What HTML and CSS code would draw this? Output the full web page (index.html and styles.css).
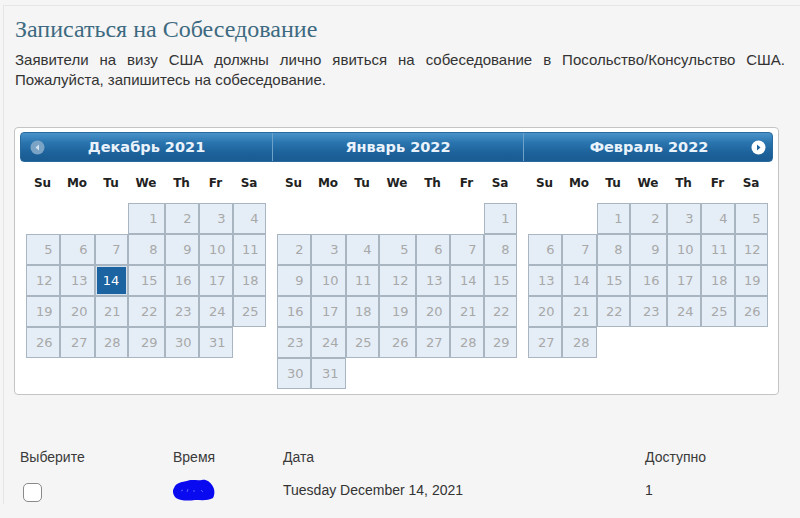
FILE: index.html
```html
<!DOCTYPE html>
<html lang="ru">
<head>
<meta charset="utf-8">
<title>Записаться на Собеседование</title>
<link rel="stylesheet" href="styles.css">
</head>
<body>
<div class="page">
  <h1 class="title">Записаться на Собеседование</h1>
  <p class="intro">Заявители на визу США должны лично явиться на собеседование в Посольство/Консульство США. Пожалуйста, запишитесь на собеседование.</p>

  <div class="datepicker">
    <div class="dp-header">
      <div class="dp-title">
        <span class="nav nav-prev">
          <svg width="15" height="15" viewBox="0 0 15 15"><circle cx="7.5" cy="7.5" r="7" fill="#7aa3c6"/><path d="M9 4.5 L5.5 7.5 L9 10.5 Z" fill="#d3e2ef"/></svg>
        </span>
        <span class="dp-name">Декабрь 2021</span>
        <span></span>
      </div>
      <div class="dp-title">
        <span></span>
        <span class="dp-name">Январь 2022</span>
        <span></span>
      </div>
      <div class="dp-title">
        <span></span>
        <span class="dp-name">Февраль 2022</span>
        <span class="nav nav-next">
          <svg width="15" height="15" viewBox="0 0 15 15"><circle cx="7.5" cy="7.5" r="7" fill="#ffffff"/><path d="M6 4.5 L9.5 7.5 L6 10.5 Z" fill="#1d64a0"/></svg>
        </span>
      </div>
    </div>

    <div class="dp-months">
      <div class="month">
        <div class="dow"><span>Su</span><span>Mo</span><span>Tu</span><span>We</span><span>Th</span><span>Fr</span><span>Sa</span></div>
        <div class="days">
          <span class="day start-4">1</span><span class="day">2</span><span class="day">3</span><span class="day">4</span>
          <span class="day">5</span><span class="day">6</span><span class="day">7</span><span class="day">8</span><span class="day">9</span><span class="day">10</span><span class="day">11</span>
          <span class="day">12</span><span class="day">13</span><span class="day selected">14</span><span class="day">15</span><span class="day">16</span><span class="day">17</span><span class="day">18</span>
          <span class="day">19</span><span class="day">20</span><span class="day">21</span><span class="day">22</span><span class="day">23</span><span class="day">24</span><span class="day">25</span>
          <span class="day">26</span><span class="day">27</span><span class="day">28</span><span class="day">29</span><span class="day">30</span><span class="day">31</span>
        </div>
      </div>
      <div class="month">
        <div class="dow"><span>Su</span><span>Mo</span><span>Tu</span><span>We</span><span>Th</span><span>Fr</span><span>Sa</span></div>
        <div class="days">
          <span class="day start-7">1</span>
          <span class="day">2</span><span class="day">3</span><span class="day">4</span><span class="day">5</span><span class="day">6</span><span class="day">7</span><span class="day">8</span>
          <span class="day">9</span><span class="day">10</span><span class="day">11</span><span class="day">12</span><span class="day">13</span><span class="day">14</span><span class="day">15</span>
          <span class="day">16</span><span class="day">17</span><span class="day">18</span><span class="day">19</span><span class="day">20</span><span class="day">21</span><span class="day">22</span>
          <span class="day">23</span><span class="day">24</span><span class="day">25</span><span class="day">26</span><span class="day">27</span><span class="day">28</span><span class="day">29</span>
          <span class="day">30</span><span class="day">31</span>
        </div>
      </div>
      <div class="month">
        <div class="dow"><span>Su</span><span>Mo</span><span>Tu</span><span>We</span><span>Th</span><span>Fr</span><span>Sa</span></div>
        <div class="days">
          <span class="day start-3">1</span><span class="day">2</span><span class="day">3</span><span class="day">4</span><span class="day">5</span>
          <span class="day">6</span><span class="day">7</span><span class="day">8</span><span class="day">9</span><span class="day">10</span><span class="day">11</span><span class="day">12</span>
          <span class="day">13</span><span class="day">14</span><span class="day">15</span><span class="day">16</span><span class="day">17</span><span class="day">18</span><span class="day">19</span>
          <span class="day">20</span><span class="day">21</span><span class="day">22</span><span class="day">23</span><span class="day">24</span><span class="day">25</span><span class="day">26</span>
          <span class="day">27</span><span class="day">28</span>
        </div>
      </div>
    </div>
  </div>

  <div class="slots">
    <span class="slot-head">Выберите</span>
    <span class="slot-head">Время</span>
    <span class="slot-head">Дата</span>
    <span class="slot-head">Доступно</span>

    <span class="slot-cell"><span class="checkbox"></span></span>
    <span class="slot-cell">
      <svg class="scribble" width="42" height="22" viewBox="0 0 42 22"><path d="M1 9 C3 3 10 3 14 2 C18 0 24 2 29 1 C33 0 37 3 39 6 C42 10 42 15 40 19 C35 22 28 21 22 21 C15 22 8 22 3 19 C0 16 -1 12 1 9 Z" fill="#0a0af0"/><path d="M8 12 L10 11 M14 13 L15 10 M20 12 L22 12 M28 11 L30 13" stroke="#6f6ff7" stroke-width="0.8"/></svg>
    </span>
    <span class="slot-cell">Tuesday December 14, 2021</span>
    <span class="slot-cell">1</span>
  </div>
</div>
</body>
</html>
```

FILE: styles.css
```css
html, body {
  margin: 0;
  padding: 0;
}

body {
  background: #f5f5f5;
  font-family: "Liberation Sans", Arial, sans-serif;
  color: #333;
  width: 800px;
  height: 518px;
  overflow: hidden;
}

.page {
  margin: 5px 0 0 3px;
  border-top: 1px solid #e6e6e6;
  border-left: 1px solid #e6e6e6;
  padding: 9px 11px 0 11px;
}

.title {
  margin: 0;
  font-family: "Liberation Serif", "Times New Roman", serif;
  font-weight: normal;
  font-size: 24px;
  line-height: 28px;
  color: #3d6a80;
}

.intro {
  margin: 7px 0 0 0;
  width: 770px;
  font-size: 15px;
  line-height: 20px;
  text-align: justify;
  color: #333;
}

.datepicker {
  margin: 37px 0 0 -1px;
  width: 753px;
  padding: 4px 5px 5px 5px;
  background: #fff;
  border: 1px solid #c4c4c4;
  border-radius: 4px;
}

.dp-header {
  display: grid;
  grid-template-columns: 251px 251px 251px;
  height: 30px;
  border-radius: 4px;
  background: linear-gradient(#4a92c9 0%, #2a74ae 35%, #1d629b 70%, #1a5b91 100%);
  border: 1px solid #2a6b9f;
  box-sizing: border-box;
}

.dp-title {
  display: grid;
  grid-template-columns: 1fr auto 1fr;
  align-items: center;
}

.dp-title + .dp-title {
  border-left: 1px solid #6ea2cb;
}

.dp-name {
  font-family: "DejaVu Sans", Verdana, sans-serif;
  font-weight: bold;
  font-size: 14.5px;
  color: #eaf3fb;
  line-height: 28px;
}

.nav {
  display: flex;
  align-items: center;
}

.nav-prev {
  justify-content: flex-start;
  padding-left: 9px;
}

.nav-next {
  justify-content: flex-end;
  padding-right: 8px;
}

.nav svg {
  display: block;
}

.dp-months {
  display: grid;
  grid-template-columns: 251px 251px 251px;
  align-items: start;
}

.month {
  width: 240px;
  margin: 0 auto;
}

.dow,
.days {
  display: grid;
  grid-template-columns: 34px 35px 33px 37px 34px 34px 33px;
}

.dow {
  height: 41px;
  padding-top: 1px;
  box-sizing: border-box;
  align-items: center;
  font-family: "DejaVu Sans", Verdana, sans-serif;
  font-weight: bold;
  font-size: 12px;
  color: #222;
  text-align: center;
}

.days {
  grid-auto-rows: 31px;
}

.day {
  box-sizing: border-box;
  border: 1px solid #a9b6c2;
  background: #e5eef7;
  font-family: "DejaVu Sans", Verdana, sans-serif;
  font-size: 13px;
  line-height: 29px;
  color: #a8a8a8;
  text-align: right;
  padding-right: 6px;
}

.day.selected {
  background: #1b63a1;
  color: #fff;
  text-align: center;
  padding-right: 0;
  box-shadow: inset 0 0 0 1px #d6e3ee;
}

.start-3 { grid-column-start: 3; }
.start-4 { grid-column-start: 4; }
.start-7 { grid-column-start: 7; }

.slots {
  display: grid;
  grid-template-columns: 153px 110px 362px 1fr;
  grid-template-rows: 20px 24px;
  row-gap: 13px;
  margin: 52px 0 0 5px;
  font-size: 14px;
  line-height: 20px;
  color: #333;
}

.slot-head {
  color: #3a3a3a;
}

.slot-cell {
  display: flex;
  align-items: flex-start;
}

.checkbox {
  display: block;
  width: 17px;
  height: 17px;
  margin: 3px 0 0 3px;
  border: 1.5px solid #8a8a8a;
  border-radius: 5px;
  background: #fff;
}

.scribble {
  display: block;
  margin-top: -1px;
}
```
